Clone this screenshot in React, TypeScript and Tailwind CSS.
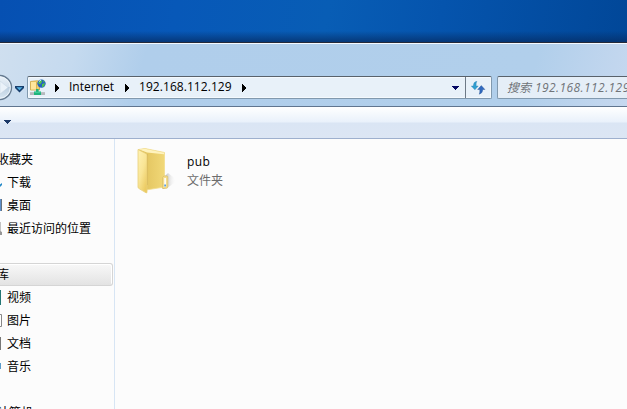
import React from "react";

const Caret = () => (
  <svg width="5" height="8" viewBox="0 0 5 8" className="block shrink-0" shapeRendering="crispEdges">
    <path d="M0 0h1v1h1v1h1v1h1v2H3v1H2v1H1v1H0z" fill="#000" />
  </svg>
);

const Down = ({ color }: { color: string }) => (
  <svg width="7" height="4" viewBox="0 0 7 4" className="block shrink-0" shapeRendering="crispEdges">
    <path d="M0 0h7v1H6v1H5v1H4v1H3V3H2V2H1V1H0z" fill={color} />
  </svg>
);

const NetworkFolder = () => (
  <svg width="16" height="17" viewBox="0 0 16 17" className="block shrink-0">
    <path d="M.5 2.5l7-.8 2 .8v8.5h-9z" fill="#efd06c" stroke="#cfa744" strokeWidth=".8" />
    <path d="M1 3h5.5v7.5H1z" fill="#ffe79c" />
    <path d="M6.5 3v7.5" stroke="#d3ab42" strokeWidth=".8" />
    <circle cx="11.5" cy="4.6" r="4.2" fill="#2462c4" />
    <path d="M8 4q1-3 3.5-3.2l.5 2.2-2 2.5zM12 5l3-1-.8 3-2.2 1.5zM13 1l2 2-1.5.3z" fill="#52c34c" />
    <path d="M9 2.6q1-1.2 2-1.2" stroke="#c4edff" fill="none" />
    <path d="M0 14.2h15" stroke="#b9bdc0" strokeWidth="2.2" />
    <path d="M0 15.4h15" stroke="#8f9698" strokeWidth=".6" />
    <path d="M6 10h2.6v2.6H11V16H4v-3.4h2z" fill="#1fb37c" />
    <path d="M4.5 13.3h6" stroke="#49dba5" strokeWidth=".8" />
  </svg>
);

const Refresh = () => (
  <svg width="15" height="14" viewBox="0 0 15 14" className="block">
    <path d="M5.8.3Q2.2 1 2.4 5H.3l3.6 3.8L7.2 5H5.1Q4.8 2 5.8.3z" fill="#2f9fd0" stroke="#2b7eb4" strokeWidth=".4" />
    <path d="M8.3 13.2q3.4-.8 3.4-4.7h2.2l-3.6-3.9-3.6 3.9h2.1q.3 2.8-.5 4.7z" fill="#306ac0" stroke="#204e91" strokeWidth=".4" />
  </svg>
);

const Folder = () => (
  <svg width="44" height="48" viewBox="0 0 44 48" className="block shrink-0">
    <defs>
      <linearGradient id="front" x2=".7" y2="1">
        <stop stopColor="#fff2b4" /><stop offset=".55" stopColor="#f9e596" /><stop offset="1" stopColor="#eccb62" />
      </linearGradient>
      <linearGradient id="back" x2="1">
        <stop stopColor="#d9b751" /><stop offset=".4" stopColor="#e6c965" /><stop offset="1" stopColor="#f1d878" />
      </linearGradient>
      <linearGradient id="shadow" x2="1">
        <stop stopColor="#8a8a8a" /><stop offset="1" stopColor="#fcfcfc" stopOpacity="0" />
      </linearGradient>
    </defs>
    <path d="M26 41V30l5-5q5 3 8 8-4 5-13 8z" fill="url(#shadow)" opacity=".8" />
    <path d="M1.500 1.500L8 .5l19.500 4V39L9 42z" fill="url(#back)" stroke="#f3dd8b" strokeWidth=".8" />
    <path d="M2 1.600L8 .7l19 4v1.500L10 4.500z" fill="#fff3be" />
    <path d="M10.500 6v31" stroke="#c7a547" strokeWidth=".8" opacity=".65" />
    <path d="M1 1.500l8.200 4.200q.8.500.8 1.500v37q0 1-1 .6L2 40.600q-1-.6-1-1.600z" fill="url(#front)" stroke="#e8cf78" strokeWidth=".8" />
    <path d="M25.500 40.500V29.500l1.500-1.500h3q.8 0 .8 1v10q0 1-1 1.200z" fill="#f4dc8c" stroke="#d9bd69" strokeWidth=".7" />
    <path d="M27.300 30h1.600v9h-1.600z" fill="#fff" />
    <path d="M27.300 36.500h1.600v2h-1.600z" fill="#4995dc" />
  </svg>
);

const Sliver = ({ kind }: { kind: string }) => (
  <svg width="3" height="15" viewBox="0 0 3 15" className="block shrink-0">
    {kind === "down" && <path d="M0 9.500l2-1.500v2l-2 2z" fill="#2388c7" />}
    {kind === "desktop" && <><path d="M0 1h1v12H0z" fill="#5d8fcb" /><path d="M1 1h1v12H1z" fill="#66727e" /></>}
    {kind === "recent" && <><path d="M0 1h1v13H0z" fill="#c3c3c3" /><path d="M0 10l2 1v3H0z" fill="#969696" /></>}
    {kind === "video" && <path d="M0 0h1v15H0z" fill="#247775" />}
    {kind === "picture" && <path d="M0 1.500h1.500v12H0" fill="#fff" stroke="#888" />}
    {kind === "document" && <path d="M0 1h1v13H0z" fill="#777" />}
    {kind === "music" && <path d="M0 4h1v6H0z" fill="#5a9ccc" />}
  </svg>
);

const Item = ({ label, kind }: { label: string; kind: string }) => (
  <div className="flex h-[23px] items-center">
    <Sliver kind={kind} />
    <span className="ml-1 whitespace-nowrap">{label}</span>
  </div>
);

export default function App() {
  return (
    <div className="flex h-[409px] w-[627px] flex-col overflow-hidden bg-[#fcfcfc] font-['Open_Sans','Noto_Sans_CJK_SC',sans-serif] text-[12px] leading-[18px] text-black">
      <div className="flex h-[42px] shrink-0 flex-col justify-end bg-[linear-gradient(100deg,#0650b2_0%,#0758b8_28%,#085db5_52%,#0554ad_70%,#014798_100%)]">
        <div className="h-[11px] bg-linear-to-b from-transparent to-[#052d65]/75" />
      </div>
      <div className="h-px shrink-0 bg-[#252a39]" />
      <div className="h-px shrink-0 bg-[#f4f9ff]" />
      <header className="flex h-[62px] shrink-0 items-start bg-[linear-gradient(105deg,#cfdfef_0%,#c5daef_12%,#b0ceeb_23%,#b1cfeb_84%,#c6d8ef_100%)] pt-8">
        <svg width="27" height="27" viewBox="0 0 27 27" className="-mt-[2px] block shrink-0">
          <defs><linearGradient id="nav" x2="0" y2="1"><stop stopColor="#edf4fa" /><stop offset=".48" stopColor="#d3e0ec" /><stop offset=".5" stopColor="#bccfe0" /><stop offset="1" stopColor="#dce9f3" /></linearGradient></defs>
          <circle cx="-.5" cy="13.5" r="12" fill="url(#nav)" stroke="#667b90" strokeWidth="1.4" />
          <circle cx="-.5" cy="13.5" r="10.8" fill="none" stroke="#edf5fb" />
          <path d="M0 7l8 6.500L0 20z" fill="#eaf2f9" stroke="#c6d5e2" strokeWidth=".5" />
          <path d="M15 12h9v2l-4.500 4.500L15 14z" fill="#173e6d" />
          <path d="M16.500 13.200h6l-3 3z" fill="#52b0e4" />
        </svg>
        <div className="flex h-[23px] w-[465px] shrink-0 rounded-[2px] border border-[#8199ae] border-t-[#59626b] bg-[#e8f1f9] shadow-[inset_0_0_0_1px_#f4f9fd]">
          <div className="flex flex-1 items-center pl-[2px]">
            <NetworkFolder />
            <div className="ml-[9px]"><Caret /></div>
            <span className="ml-[9px] w-[56px] pb-[2px]">Internet</span>
            <Caret />
            <span className="ml-[9px] w-[103px] pb-[2px] tracking-[0.06px]">192.168.112.129</span>
            <Caret />
            <div className="mr-[6px] ml-auto"><Down color="#050863" /></div>
          </div>
          <div className="flex w-[26px] items-center justify-center border-l border-[#6d7986]"><Refresh /></div>
        </div>
        <div className="ml-[5px] flex h-[23px] flex-1 items-center overflow-hidden rounded-l-[2px] border border-r-0 border-[#8199ae] border-t-[#59626b] bg-[#e5eef7] pl-[9px] whitespace-nowrap text-[#707479] italic">
          <span>搜索</span><span className="ml-1 tracking-[0.42px]">192.168.112.129</span>
        </div>
      </header>
      <div className="h-px shrink-0 bg-[#60758f]" />
      <div className="flex h-[32px] shrink-0 items-center border-b border-[#9eb0ce] bg-[linear-gradient(to_bottom,#fff_0,#e9f1fb_15px,#dae5f4_16px,#dce6f4_100%)] pb-px pl-1">
        <Down color="#1c3968" />
      </div>
      <main className="flex min-h-0 flex-1">
        <aside className="w-[115px] shrink-0 overflow-hidden border-r border-[#d7e5f4] pt-[9px]">
          <div className="-ml-[3px] flex h-[23px] items-center whitespace-nowrap">收藏夹</div>
          <Item label="下载" kind="down" />
          <Item label="桌面" kind="desktop" />
          <Item label="最近访问的位置" kind="recent" />
          <div className="mt-[23px] mr-px flex h-[23px] items-center rounded-r-[3px] border border-l-0 border-[#d5d5d5] bg-linear-to-b from-[#f8f8f8] to-[#e3e3e3] shadow-[inset_-1px_1px_0_#fff]"><span className="-ml-[3px]">库</span></div>
          <Item label="视频" kind="video" />
          <Item label="图片" kind="picture" />
          <Item label="文档" kind="document" />
          <Item label="音乐" kind="music" />
          <div className="mt-[23px] -ml-[3px] flex h-[23px] items-center whitespace-nowrap">计算机</div>
        </aside>
        <section className="flex items-start pt-[9px] pl-[22px]">
          <Folder />
          <div className="ml-[6px] pt-[5px]">
            <div className="tracking-[0.4px]">pub</div>
            <div className="pt-px text-[#6d6d6d]">文件夹</div>
          </div>
        </section>
      </main>
    </div>
  );
}
